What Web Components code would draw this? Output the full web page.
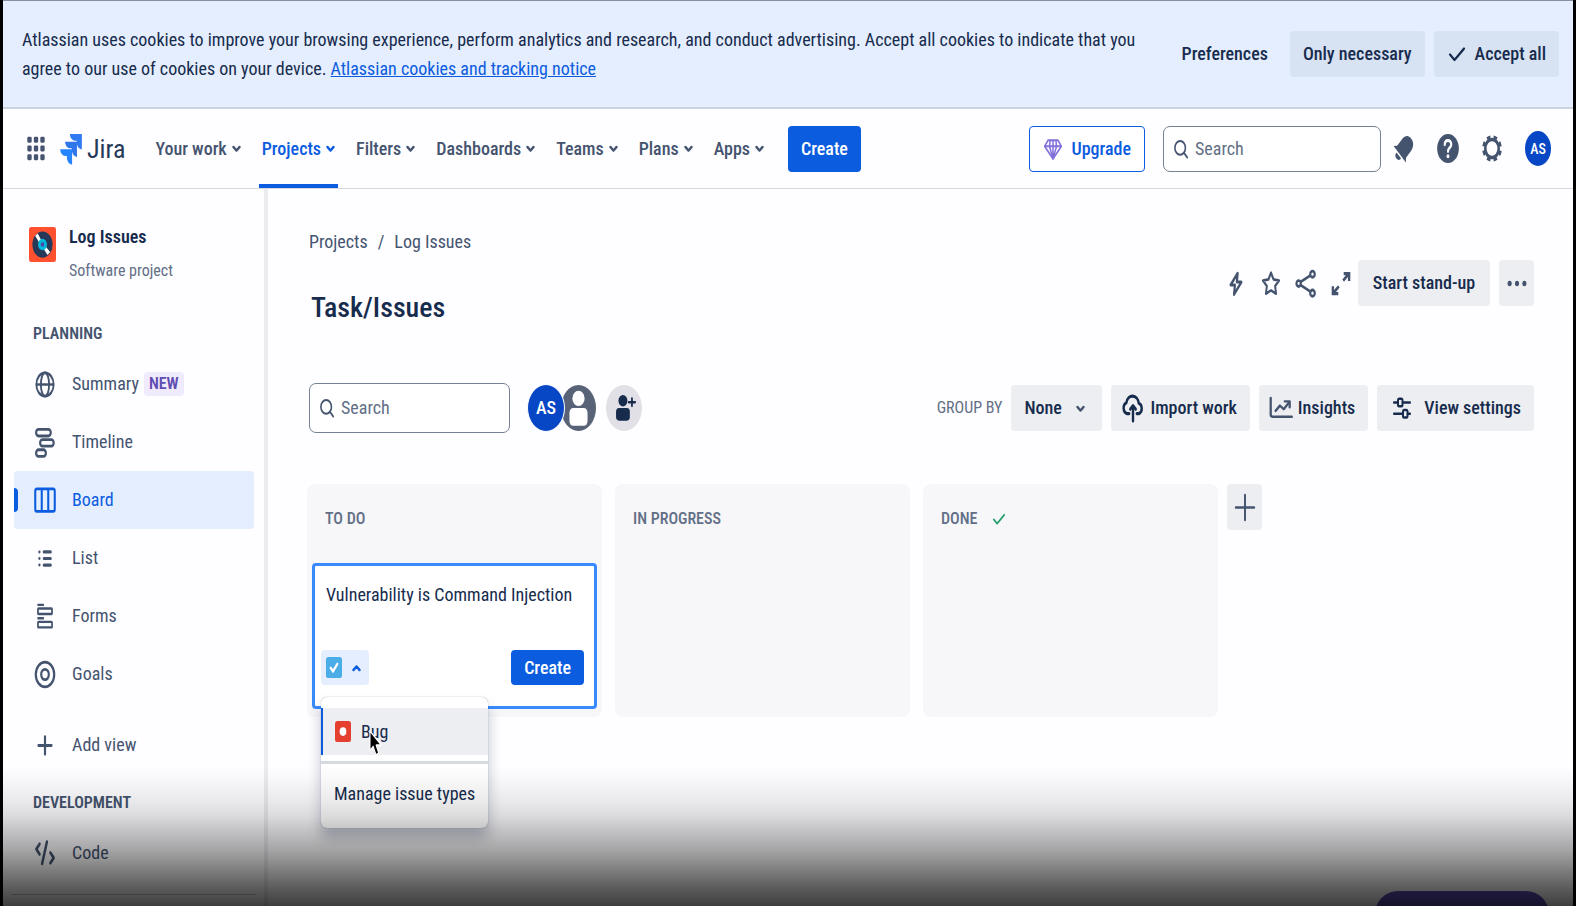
<!DOCTYPE html>
<html lang="en">
<head>
<meta charset="utf-8">
<meta name="viewport" content="width=device-width, initial-scale=1">
<title>Task/Issues - Jira</title>
<style>
  html, body { margin: 0; height: 100%; overflow: hidden; }
  body {
    background: #fefdff;
    color: #172b4d;
    font: 400 18px/24px "Roboto Condensed", Roboto, "Liberation Sans", sans-serif;
  }
</style>
</head>
<body>
<app-shell></app-shell>

<script>
const ICONS = {
  grid: '<g fill="currentColor"><rect x="4" y="4" width="4" height="4" rx="1"/><rect x="10" y="4" width="4" height="4" rx="1"/><rect x="16" y="4" width="4" height="4" rx="1"/><rect x="4" y="10" width="4" height="4" rx="1"/><rect x="10" y="10" width="4" height="4" rx="1"/><rect x="16" y="10" width="4" height="4" rx="1"/><rect x="4" y="16" width="4" height="4" rx="1"/><rect x="10" y="16" width="4" height="4" rx="1"/><rect x="16" y="16" width="4" height="4" rx="1"/></g>',
  jira: '<g fill="#2684ff"><path d="M11 2h11v10.600a5 5 0 0 1-4.800-5V6.600h-1.500A4.700 4.700 0 0 1 11 2z" fill="#2f7af0"/><path d="M6.500 7.300h11v10.600a5 5 0 0 1-4.800-5v-1h-1.500a4.700 4.700 0 0 1-4.700-4.600z" fill="#3076ea"/><path d="M2 12.500h11v10.600a5 5 0 0 1-4.800-5v-1H6.700A4.700 4.700 0 0 1 2 12.500z"/></g>',
  check: '<path d="M5 12.500l4.500 5L19 7" fill="none" stroke="currentColor" stroke-width="2.200" stroke-linecap="round" stroke-linejoin="round"/>',
  search: '<g fill="none" stroke="currentColor" stroke-width="1.900"><circle cx="11" cy="11" r="6.300"/><path d="M15.500 15.500L19.500 19.800" stroke-linecap="round"/></g>',
  gem: '<g fill="none" stroke="currentColor" stroke-width="1.800" stroke-linejoin="round"><path d="M6 4h12l4 5.500L12 21 2 9.500z"/><path d="M2 9.500h20M8.500 4L7.800 9.500 12 21l4.200-11.500L15.500 4M12 4v17"/></g>',
  bell: '<g fill="currentColor" transform="rotate(45 12 12)"><path d="M12 2.500c3.900 0 5.800 2.800 5.800 6.700v6l2.200 2.300H4l2.200-2.300v-6c0-3.900 1.900-6.700 5.800-6.700z"/><path d="M9 18.800h6a3 3 0 0 1-6 0z"/></g>',
  help: '<circle cx="12" cy="12" r="10" fill="currentColor"/><path d="M9 9.500c0-1.900 1.300-3 3-3s3 1.100 3 2.700c0 2.200-3 2.300-3 4.800" fill="none" stroke="#fefdff" stroke-width="2" stroke-linecap="round"/><circle cx="12" cy="17.300" r="1.300" fill="#fefdff"/>',
  gear: '<circle cx="12" cy="12" r="6.200" fill="none" stroke="currentColor" stroke-width="2.400"/><circle cx="12" cy="12" r="7.900" fill="none" stroke="currentColor" stroke-width="2.400" pathLength="80" stroke-dasharray="5.400 4.600" transform="rotate(10.500 12 12)"/>',
  globe: '<g fill="none" stroke="currentColor" stroke-width="1.700"><circle cx="12" cy="12" r="8"/><ellipse cx="12" cy="12" rx="3.800" ry="8"/><path d="M4 12h16"/></g>',
  timeline: '<g fill="none" stroke="currentColor" stroke-width="2"><rect x="3.800" y="3" width="13.500" height="4.500" rx="2.200"/><rect x="7.500" y="10" width="12.500" height="4.500" rx="2.200"/><rect x="3.800" y="17" width="9" height="4.500" rx="2.200"/></g>',
  board: '<g fill="none" stroke="currentColor" stroke-width="1.900"><rect x="3" y="4" width="18" height="15.500" rx="1.500"/><path d="M9 4v15.500M15 4v15.500"/></g>',
  list: '<g stroke="currentColor" stroke-width="2.200" stroke-linecap="round"><path d="M11 7.500h6.200M11 12h6.200M11 16.500h6.200"/><path d="M6.800 7.500h.1M6.800 12h.1M6.800 16.500h.1" stroke-width="2"/></g>',
  forms: '<g fill="none" stroke="currentColor" stroke-width="1.600"><path d="M5 4h6M5 13.200h6"/><rect x="5.500" y="6.500" width="13" height="3.800" rx=".5"/><rect x="5.500" y="15.700" width="13" height="3.800" rx=".5"/></g>',
  goals: '<g fill="none" stroke="currentColor" stroke-width="2"><circle cx="12" cy="12" r="8.500"/><circle cx="12" cy="12" r="3.500"/></g>',
  plus: '<path d="M12 6v12M6 12h12" fill="none" stroke="currentColor" stroke-width="2" stroke-linecap="round"/>',
  bigplus: '<path d="M12 3.500v17M3.500 12h17" fill="none" stroke="#44546f" stroke-width="1.800" stroke-linecap="round"/>',
  code: '<g fill="none" stroke="currentColor" stroke-width="2.200" stroke-linecap="round" stroke-linejoin="round"><path d="M7 5.500L4 9l3 3.500M13.800 4L9.300 19M17 11.500l3 3.500-3 3.500"/></g>',
  bolt: '<path d="M13.500 5L7 13h4L10.200 19.500 17 11h-4.200z" fill="none" stroke="currentColor" stroke-width="2" stroke-linejoin="round"/>',
  star: '<path d="M12 4.500l2.300 4.700 5.200.8-3.700 3.700.9 5.300L12 16.700 7.300 19l.9-5.300L4.500 10l5.200-.8z" fill="none" stroke="currentColor" stroke-width="1.800" stroke-linejoin="round"/>',
  share: '<g fill="none" stroke="currentColor" stroke-width="2"><circle cx="5.200" cy="12" r="2"/><circle cx="18" cy="5.600" r="2.100"/><circle cx="18" cy="18.600" r="2.100"/><path d="M7.200 10.800l8.800-4.300M7.200 13.200l8.800 4.300"/></g>',
  expand: '<g fill="none" stroke="currentColor" stroke-width="2.200"><path d="M14 10l5-4.500M10 14l-5 4.500"/><path d="M14.500 5.200H19.500v5M9.500 18.900h-5v-5"/></g>',
  more: '<g fill="#44546f"><circle cx="5.200" cy="12" r="1.900"/><circle cx="12" cy="12" r="1.900"/><circle cx="18.800" cy="12" r="1.900"/></g>',
  upload: '<g fill="none" stroke="currentColor" stroke-width="2.200" stroke-linecap="round" stroke-linejoin="round"><path d="M8.500 15.500H6.500a3.900 3.900 0 0 1-.6-7.500 5.800 5.800 0 0 1 11.400.4 3.700 3.700 0 0 1 .2 7.100h-2"/><path d="M12 20.500V10.500"/><path d="M9.500 12.500L12 10l2.500 2.500"/></g>',
  chart: '<g fill="none" stroke="#44546f" stroke-width="2.100" stroke-linecap="round" stroke-linejoin="round"><path d="M2.500 3.500v14a2 2 0 0 0 2 2H22"/><path d="M7 14.500l4-4.500 3.500 3L19.500 7"/><path d="M15.500 6.300H20v5"/></g>',
  sliders: '<g fill="none" stroke="currentColor" stroke-width="2" stroke-linecap="round"><path d="M4 7.500h3M13.500 7.500H20M4 16.500h7.500M17.800 16.500H20"/><rect x="8" y="4.500" width="4.500" height="6" rx="1"/><rect x="13" y="13.500" width="4.500" height="6" rx="1"/></g>',
  down: '<path d="M4 6l8 11 8-11" fill="none" stroke="currentColor" stroke-width="6.500" stroke-linecap="round" stroke-linejoin="round"/>',
  up: '<path d="M4 18l8-11 8 11" fill="none" stroke="currentColor" stroke-width="6.500" stroke-linecap="round" stroke-linejoin="round"/>',
  task: '<rect width="24" height="24" rx="3" fill="#4bade8"/><path d="M7 12.500l3.500 4L17 8" fill="none" stroke="#fff" stroke-width="3.200" stroke-linecap="round" stroke-linejoin="round"/>',
  bug: '<rect width="24" height="24" rx="3" fill="#e5402f"/><circle cx="12" cy="12" r="5" fill="#fff"/>',
  record: '<rect width="24" height="24" rx="2" fill="#ff5130"/><circle cx="12" cy="12" r="9" fill="#253858"/><path d="M5.500 6l2.200-1.600 3 4.400-2 1.500zM13.200 15.200l2-1.500 3.600 3.500-2.300 2z" fill="#fff"/><circle cx="12" cy="12" r="4" fill="#00b8d9"/><circle cx="12" cy="12" r="1.500" fill="#5243aa"/>',
  person: '<circle cx="12" cy="12" r="12" fill="#596377"/><rect x="5.800" y="12" width="12.400" height="9.300" rx="2.500" fill="#fff"/><ellipse cx="12" cy="7" rx="4.200" ry="4" fill="#fff"/>',
  addperson: '<circle cx="12" cy="12" r="12" fill="#e0e0e6"/><rect x="6.700" y="12" width="9.200" height="6.600" rx="2" fill="#172b4d"/><circle cx="11.300" cy="8.200" r="3" fill="#172b4d"/><path d="M17.300 7v4M15.200 9h4.200" stroke="#172b4d" stroke-width="1.200" stroke-linecap="round"/>',
  pointer: '<path d="M3 1v18l4.800-3.800L12 23l4-1.800-3.800-7.200H20z" fill="#000" stroke="#fff" stroke-width="1.500" stroke-linejoin="round"/>'
};

class Base extends HTMLElement {
  connectedCallback() {
    if (this.shadowRoot) return;
    const tpl = document.createElement('template');
    tpl.innerHTML = '<style>*{box-sizing:border-box}' + this.css() + '</style>' + this.html();
    this.attachShadow({ mode: 'open' }).append(tpl.content.cloneNode(true));
  }
  css() { return ''; }
  html() { return '<slot></slot>'; }
}

/* Icons share a 24-unit grid; the host's --w / --h set the drawn size. */
customElements.define('ui-icon', class extends Base {
  css() { return ':host{display:block;flex:none;width:var(--w,26px);height:var(--h,35px)}svg{display:block;width:100%;height:100%}'; }
  html() { return `<svg viewBox="0 0 24 24" preserveAspectRatio="none" aria-hidden="true">${ICONS[this.getAttribute('name')]}</svg>`; }
});

customElements.define('ui-button', class extends Base {
  css() { return `
    :host{display:block;flex:none}
    button{display:flex;align-items:center;justify-content:center;gap:4px;width:100%;height:46px;margin:0;padding:0 13px;
      border:0;border-radius:4px;background:#eceef1;color:#172b4d;font:inherit;font-weight:500;white-space:nowrap}
    :host([look=plain]) button{background:none}
    :host([look=tint]) button{background:#d7e2f2}
    :host([look=primary]) button{background:#0c5ce0;color:#fff}
    :host([look=outline]) button{background:#fff;color:#0c5ce0;border:1px solid #0c5ce0}
    :host([lead]) button{padding-left:9px}
    :host([short]) button{height:35px}
    :host([square]) button{width:35px;padding:0}
    :host([bare]) button{width:35px;padding:0;background:none;color:#44546f}`; }
  html() { const l = this.getAttribute('label'); return `<button type="button"${l ? ` aria-label="${l}"` : ''}><slot></slot></button>`; }
});

customElements.define('ui-search', class extends Base {
  css() { return `
    :host{display:block;flex:none}
    label{display:flex;align-items:center;gap:4px;width:100%;height:100%;padding-left:7px;border:1px solid #758195;border-radius:7px;color:#44546f;background:#fff}
    ui-icon{--w:20px;--h:26px}
    input{flex:1;min-width:0;border:0;outline:0;padding:0;background:none;font:inherit;color:#172b4d}
    input::placeholder{color:#626f86;opacity:1}`; }
  html() { return '<label><ui-icon name="search"></ui-icon><input type="text" placeholder="Search" aria-label="Search"></label>'; }
});

customElements.define('user-badge', class extends Base {
  css() { return `:host{display:flex;flex:none;align-items:center;justify-content:center;width:26px;height:35px;border-radius:50%;
    background:#0747c6;color:#fff;font-size:14px;font-weight:500}`; }
});

customElements.define('cookie-banner', class extends Base {
  css() { return `
    :host{display:flex;align-items:center;gap:20px;padding:24px 14px 24px 19px;border-top:1px solid #8590a2;border-bottom:2px solid #cad4e0;background:#e4eefe}
    p{flex:1;margin:0;line-height:29px}
    a{color:#0c5ce0}
    .acts{display:flex;gap:9px}
    .acts ui-icon{--w:24px;--h:26px;margin:0 2px}`; }
  html() { return `
    <p>Atlassian uses cookies to improve your browsing experience, perform analytics and research, and conduct advertising. Accept all cookies to indicate that you agree to our use of cookies on your device. <a href="#notice">Atlassian cookies and tracking notice</a></p>
    <div class="acts">
      <ui-button look="plain">Preferences</ui-button>
      <ui-button look="tint">Only necessary</ui-button>
      <ui-button look="tint" lead><ui-icon name="check"></ui-icon>Accept all</ui-button>
    </div>`; }
});

customElements.define('nav-link', class extends Base {
  css() { return `
    :host{display:block;height:79px}
    a{display:flex;align-items:center;gap:5px;height:100%;padding:0 3px;border-bottom:4px solid transparent;border-top:4px solid transparent;
      color:#44546f;font-weight:500;text-decoration:none;white-space:nowrap}
    ui-icon{--w:9px;--h:8px}
    :host([current]) a{color:#0c5ce0;border-bottom-color:#0c5ce0}`; }
  html() { return '<a href="#nav"><slot></slot><ui-icon name="down"></ui-icon></a>'; }
});

customElements.define('top-nav', class extends Base {
  css() { return `
    :host{display:flex;align-items:center;height:80px;padding:0 22px 0 20px;border-bottom:1px solid #d5d9e0;color:#44546f;box-sizing:border-box}
    .brand{display:flex;align-items:center;gap:3px;margin:0 27px 0 9px;color:#253858;font-size:26px;line-height:32px;text-decoration:none}
    nav{display:flex;gap:15px;margin-right:21px}
    .end{display:flex;align-items:center;margin-left:auto}
    .end ui-search{width:218px;height:46px;margin:0 5px 0 18px}
    .gem{--w:20px;--h:26px;color:#8270db;margin-right:4px}
    .end user-badge{margin-left:16px}
    .tools{display:flex;gap:9px}`; }
  html() { return `
    <ui-icon name="grid"></ui-icon>
    <a class="brand" href="#home"><ui-icon name="jira"></ui-icon>Jira</a>
    <nav>
      <nav-link>Your work</nav-link><nav-link current>Projects</nav-link><nav-link>Filters</nav-link>
      <nav-link>Dashboards</nav-link><nav-link>Teams</nav-link><nav-link>Plans</nav-link><nav-link>Apps</nav-link>
    </nav>
    <ui-button look="primary">Create</ui-button>
    <div class="end">
      <ui-button look="outline"><ui-icon class="gem" name="gem"></ui-icon>Upgrade</ui-button>
      <ui-search></ui-search>
      <div class="tools">
        <ui-button bare label="Notifications"><ui-icon name="bell"></ui-icon></ui-button>
        <ui-button bare label="Help"><ui-icon name="help"></ui-icon></ui-button>
        <ui-button bare label="Settings"><ui-icon name="gear"></ui-icon></ui-button>
      </div>
      <user-badge>AS</user-badge>
    </div>`; }
});

customElements.define('side-item', class extends Base {
  css() { return `
    :host{display:block}
    a{display:flex;align-items:center;gap:14px;height:58px;padding-left:18px;border-radius:4px;color:#44546f;text-decoration:none;position:relative}
    span{display:flex;align-items:center;gap:5px}
    :host([current]) a{background:#e4eefe;color:#0c5ce0}
    :host([current]) a::before{content:"";position:absolute;left:0;top:17px;width:4px;height:24px;border-radius:0 4px 4px 0;background:#0c5ce0}`; }
  html() { return `<a href="#view"><ui-icon name="${this.getAttribute('icon')}"></ui-icon><span><slot></slot></span></a>`; }
});

customElements.define('side-bar', class extends Base {
  css() { return `
    :host{display:block;overflow:hidden;padding:36px 10px 0 11px;border-right:4px solid #ebecf0}
    header{display:flex;gap:13px;margin:0 0 39px 15px}
    header ui-icon{--w:27px;margin-top:2px}
    header div{display:grid;gap:10px}
    strong{font-weight:600}
    small{font-size:16px;color:#626f86}
    h2{margin:0 0 9px 19px;font-size:16px;font-weight:600;line-height:24px;color:#44546f}
    .add{margin:13px 0 17px}
    .tag{padding:0 5px;border-radius:4px;background:#f0eafd;color:#5e4db2;font-size:16px;font-weight:600}
    hr{height:1px;margin:12px -2px 0;border:0;background:#c0c4cc}`; }
  html() { return `
    <header><ui-icon name="record"></ui-icon><div><strong>Log Issues</strong><small>Software project</small></div></header>
    <h2>PLANNING</h2>
    <side-item icon="globe">Summary <b class="tag">NEW</b></side-item>
    <side-item icon="timeline">Timeline</side-item>
    <side-item icon="board" current>Board</side-item>
    <side-item icon="list">List</side-item>
    <side-item icon="forms">Forms</side-item>
    <side-item icon="goals">Goals</side-item>
    <side-item class="add" icon="plus">Add view</side-item>
    <h2>DEVELOPMENT</h2>
    <side-item icon="code">Code</side-item>
    <hr>`; }
});

customElements.define('board-header', class extends Base {
  css() { return `
    :host{display:flex;justify-content:space-between;padding-left:2px}
    nav{display:flex;gap:10px}
    a,nav span{color:#44546f;text-decoration:none}
    h1{margin:36px 0 0 2px;font-size:28px;font-weight:500;line-height:36px}
    .acts{display:flex;align-items:center;height:46px;margin-top:30px}
    .acts .go{width:132px;margin-right:9px}`; }
  html() { return `
    <div>
      <nav aria-label="Breadcrumb"><a href="#projects">Projects</a><span>/</span><a href="#log">Log Issues</a></nav>
      <h1>Task/Issues</h1>
    </div>
    <div class="acts">
      <ui-button bare label="Automation"><ui-icon name="bolt"></ui-icon></ui-button>
      <ui-button bare label="Star"><ui-icon name="star"></ui-icon></ui-button>
      <ui-button bare label="Share"><ui-icon name="share"></ui-icon></ui-button>
      <ui-button bare label="Full screen"><ui-icon name="expand"></ui-icon></ui-button>
      <ui-button class="go">Start stand-up</ui-button>
      <ui-button square label="More"><ui-icon name="more"></ui-icon></ui-button>
    </div>`; }
});

customElements.define('board-toolbar', class extends Base {
  css() { return `
    :host{display:flex;align-items:center;padding-left:2px}
    ui-search{width:201px;height:50px}
    .people{display:flex;align-items:center;margin-left:17px}
    .people ui-icon{--w:36px;--h:46px}
    user-badge{width:38px;height:48px;border:1px solid #fefdff;font-size:18px;z-index:1}
    .people .two{margin-left:-4px;--w:35px}
    .people .inv{margin-left:10px}
    .end{display:flex;align-items:center;gap:9px;margin-left:auto}
    label{font-size:16px;color:#626f86}
    .sel{position:relative}
    select{appearance:none;width:91px;height:46px;padding:0 13px;border:0;border-radius:4px;background:#eceef1;color:#172b4d;font:inherit;font-weight:500}
    .sel ui-icon{--w:9px;--h:8px;position:absolute;right:17px;top:20px;color:#44546f;pointer-events:none}
    .chart{--h:28px}
    .sliders{--w:24px;--h:30px;margin-right:6px}`; }
  html() { return `
    <ui-search></ui-search>
    <div class="people">
      <user-badge>AS</user-badge>
      <ui-icon class="two" name="person"></ui-icon>
      <ui-icon class="inv" name="addperson"></ui-icon>
    </div>
    <div class="end">
      <label for="group">GROUP BY</label>
      <div class="sel"><select id="group"><option>None</option></select><ui-icon name="down"></ui-icon></div>
      <ui-button lead><ui-icon name="upload"></ui-icon>Import work</ui-button>
      <ui-button lead><ui-icon class="chart" name="chart"></ui-icon>Insights</ui-button>
      <ui-button><ui-icon class="sliders" name="sliders"></ui-icon>View settings</ui-button>
    </div>`; }
});

customElements.define('board-column', class extends Base {
  css() { return `
    :host{display:block;flex:none;width:295px;min-height:233px;padding:23px 5px 8px;border-radius:8px;background:#f7f6f9;box-sizing:border-box}
    h2{display:flex;align-items:center;gap:13px;margin:0 13px 32px;font-size:16px;font-weight:500;line-height:24px;color:#626f86}
    ui-icon{--w:18px;--h:20px;color:#22a06b}`; }
  html() { return `<h2>${this.getAttribute('heading')}${this.hasAttribute('done') ? '<ui-icon name="check"></ui-icon>' : ''}</h2><slot></slot>`; }
});

customElements.define('issue-menu', class extends Base {
  css() { return `
    :host{display:block;padding:11px 0 5px;border-radius:6px;background:#fff;box-shadow:0 0 1px #091e4280,0 10px 14px #091e4240;box-sizing:border-box}
    button{display:flex;align-items:center;gap:10px;width:100%;margin:0;border:0;background:none;color:#172b4d;font:inherit;text-align:left;padding:0 13px;height:59px;white-space:nowrap}
    .bug{height:47px;padding-left:12px;border-left:2px solid #0c5ce0;background:#eceef1}
    .bug ui-icon{--w:16px;--h:21px}
    hr{height:3px;margin:6px 0 0;border:0;background:#d5dae1}
    .ptr{position:absolute;left:47px;top:33px;--w:16px;--h:26px}`; }
  html() { return `
    <button type="button" class="bug"><ui-icon name="bug"></ui-icon>Bug</button>
    <hr>
    <button type="button">Manage issue types</button>
    <ui-icon class="ptr" name="pointer"></ui-icon>`; }
});

customElements.define('create-card', class extends Base {
  css() { return `
    :host{display:block;position:relative;height:146px;padding:17px 10px 0 6px;border:3px solid #388bff;border-radius:4px;background:#fff;box-sizing:border-box}
    textarea{display:block;width:100%;height:67px;margin:0;padding:0 5px;border:0;outline:0;resize:none;background:none;color:#172b4d;font:inherit;overflow:hidden}
    .row{display:flex;justify-content:space-between}
    .type{display:flex;align-items:center;gap:10px;height:35px;margin:0;padding:0 8px 0 5px;border:0;border-radius:4px;background:#e4eefe;color:#0c5ce0}
    .type ui-icon{--w:16px;--h:21px}
    .type .up{--w:9px;--h:8px}
    issue-menu{position:absolute;left:6px;top:131px;width:167px}`; }
  html() { return `
    <textarea aria-label="Summary">Vulnerability is Command Injection</textarea>
    <div class="row">
      <button class="type" type="button" aria-label="Issue type"><ui-icon name="task"></ui-icon><ui-icon class="up" name="up"></ui-icon></button>
      <ui-button look="primary" short>Create</ui-button>
    </div>
    <issue-menu></issue-menu>`; }
});

customElements.define('board-view', class extends Base {
  css() { return `
    :host{display:block;min-width:0;padding:41px 39px 0}
    board-toolbar{margin:57px 0 51px}
    .board{display:flex;gap:9px;align-items:flex-start}
    .cols{display:flex;gap:13px}`; }
  html() { return `
    <board-header></board-header>
    <board-toolbar></board-toolbar>
    <div class="board">
      <div class="cols">
        <board-column heading="TO DO"><create-card></create-card></board-column>
        <board-column heading="IN PROGRESS"></board-column>
        <board-column heading="DONE" done></board-column>
      </div>
      <ui-button square label="Add column"><ui-icon name="bigplus"></ui-icon></ui-button>
    </div>`; }
});

customElements.define('app-shell', class extends Base {
  css() { return `
    :host{display:grid;grid-template-rows:auto auto minmax(0,1fr);height:100vh;border:solid #000;border-width:0 3px;box-sizing:border-box}
    .body{display:grid;grid-template-columns:265px minmax(0,1fr)}
    .quick{position:fixed;right:27px;bottom:-31px;width:174px;height:46px;border:0;border-radius:23px;background:#5e4db2}
    .fade{position:fixed;left:0;right:0;bottom:0;height:141px;pointer-events:none;
      background:linear-gradient(#0000,#00000005 12px,#00000014 35px,#00000025 52px,#0000003f 68px,#00000059 85px,#0000007a 102px,#00000099 118px,#000000c2 141px)}`; }
  html() { return `
    <cookie-banner></cookie-banner>
    <top-nav></top-nav>
    <div class="body"><side-bar></side-bar><board-view></board-view></div>
    <button class="quick" type="button" aria-label="Quickstart"></button>
    <div class="fade"></div>`; }
});
</script>
</body>
</html>
